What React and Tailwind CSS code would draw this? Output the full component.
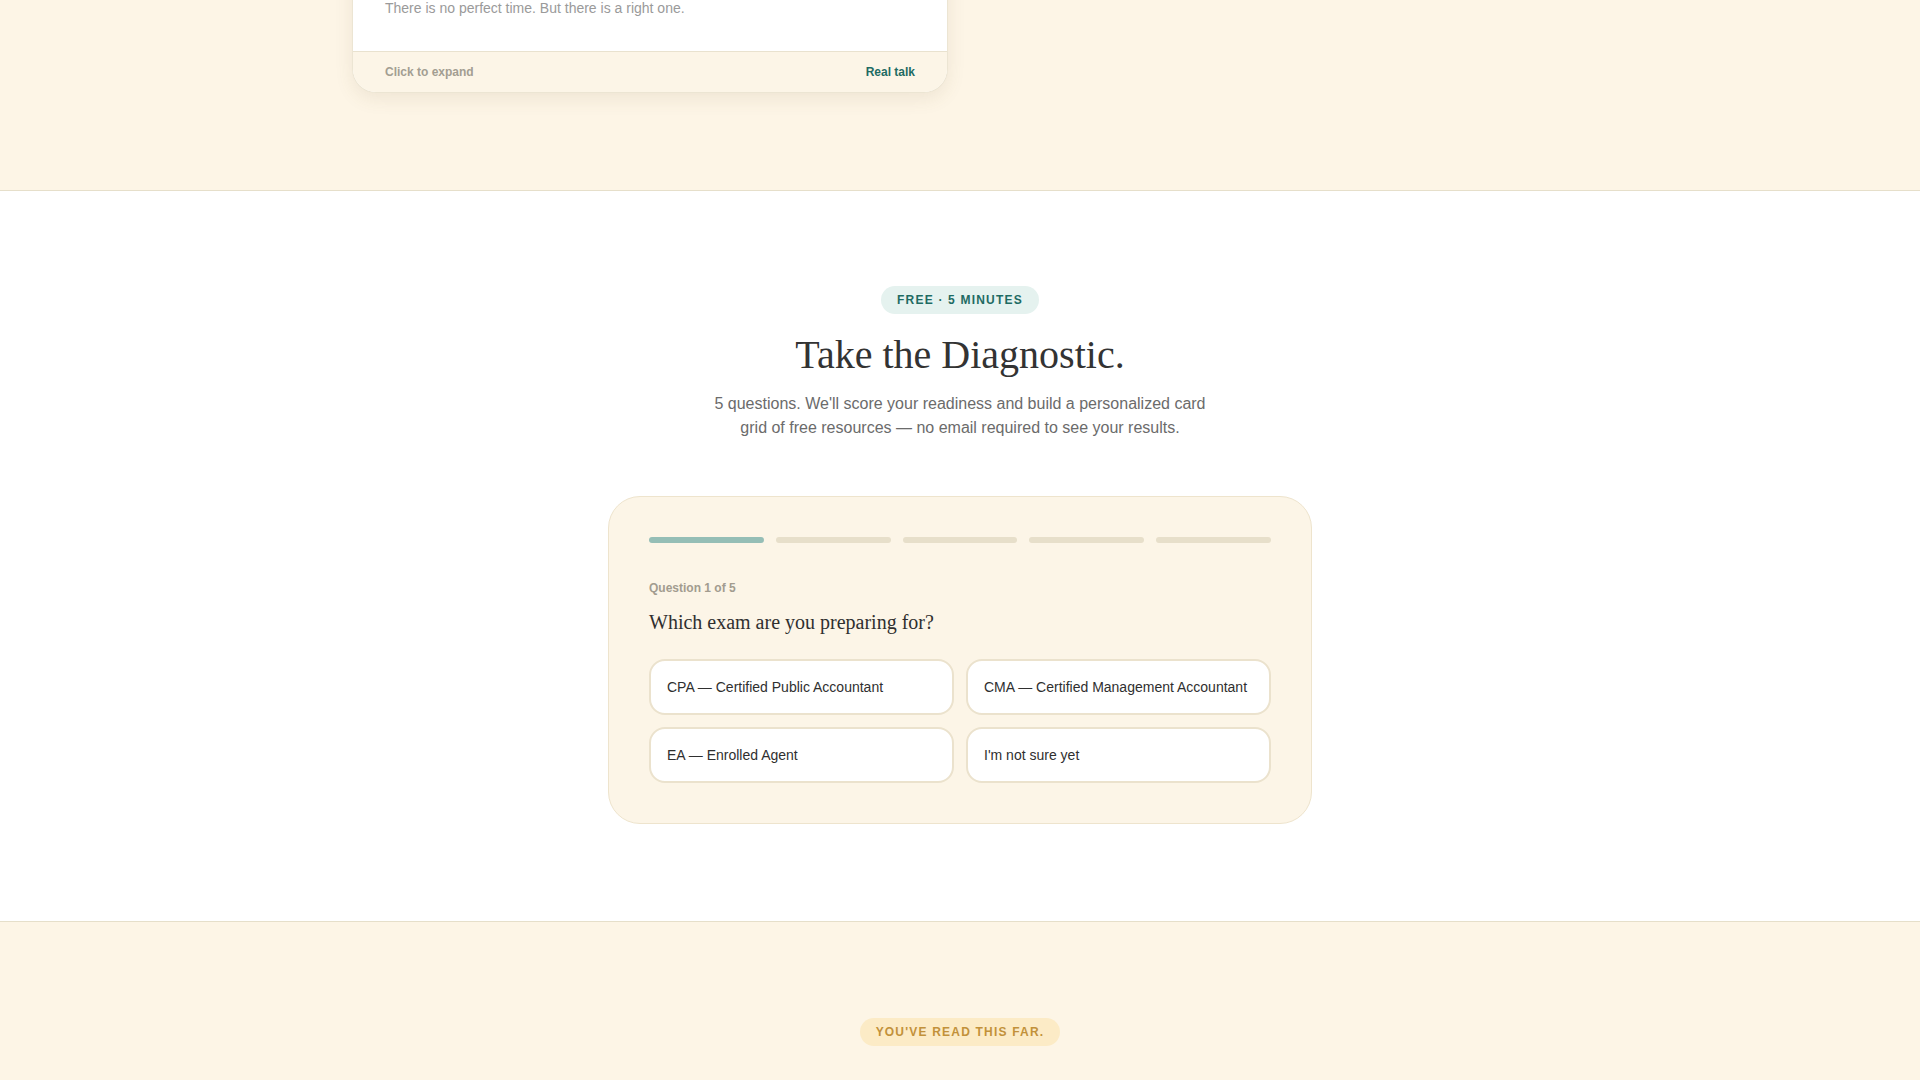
import React from 'react';

const sans = { fontFamily: '"Liberation Sans", Arial, sans-serif' };
const serif = { fontFamily: '"Liberation Serif", "Times New Roman", serif' };

const options = [
    'CPA — Certified Public Accountant',
    'CMA — Certified Management Accountant',
    'EA — Enrolled Agent',
    "I'm not sure yet",
];

function TalkCard() {
    return (
        <div className="-mt-[34px] rounded-b-3xl border border-t-0 border-[#ece5d3] bg-white shadow-[0_6px_18px_rgba(120,100,60,0.10)] overflow-hidden">
            <div className="px-8 pt-8 pb-[33px]">
                <p className="text-sm leading-5 text-[#9a9a9a]">There is no perfect time. But there is a right one.</p>
            </div>
            <div className="flex items-center justify-between border-t border-[#e9e2cf] bg-[#fcf5e7] px-8 h-[41px]">
                <span className="text-xs font-bold text-[#a39e92]">Click to expand</span>
                <span className="text-xs font-bold text-[#1e6b63]">Real talk</span>
            </div>
        </div>
    );
}

function Quiz() {
    const step = 0;
    return (
        <div className="mx-auto w-[704px] rounded-[32px] border border-[#eee4cd] bg-[#fcf5e7] p-10">
            {/* progress */}
            <div className="grid grid-cols-5 gap-3">
                {[0, 1, 2, 3, 4].map(i => (
                    <div key={i} className={i <= step ? 'h-[6px] rounded-full bg-[#95beb6]' : 'h-[6px] rounded-full bg-[#e7dfca]'} />
                ))}
            </div>

            <div className="mt-[37px] text-xs font-bold text-[#a29c8f]">Question 1 of 5</div>
            <h3 className="mt-[12px] text-xl leading-7 text-[#2f2f2f]" style={serif}>Which exam are you preparing for?</h3>

            <div className="mt-[23px] grid grid-cols-2 gap-3">
                {options.map(o => (
                    <button key={o} className="h-[56px] rounded-2xl border-2 border-[#ebe2cd] bg-white px-4 text-left text-sm text-[#2f2f2f]">
                        {o}
                    </button>
                ))}
            </div>
        </div>
    );
}

export default function App() {
    return (
        <div className="min-h-screen bg-white" style={sans}>
            {/* Real talk section (tail) */}
            <section className="bg-[#fdf5e6] pb-[97px] border-b border-[#e6dfca]">
                <div className="mx-auto max-w-7xl px-8">
                    <div className="grid grid-cols-2 gap-6">
                        <TalkCard />
                    </div>
                </div>
            </section>

            {/* Diagnostic */}
            <section className="bg-white pt-[95px] pb-[97px] border-b border-[#e6dfca]">
                <div className="flex flex-col items-center text-center">
                    <span className="rounded-full bg-[#e5f2ef] px-4 py-[6px] text-xs font-bold tracking-[0.1em] text-[#1e6b63]">FREE · 5 MINUTES</span>
                    <h2 className="mt-[17px] text-[40px] leading-[48px] text-[#333333]" style={serif}>Take the Diagnostic.</h2>
                    <p className="mt-[13px] max-w-[512px] text-base leading-6 text-[#6b6b6b]">
                        5 questions. We'll score your readiness and build a personalized card grid of free resources — no email required to see your results.
                    </p>
                </div>
                <div className="mt-[56px]">
                    <Quiz />
                </div>
            </section>

            {/* Closing */}
            <section className="bg-[#fdf5e6] pt-24 pb-24">
                <div className="flex justify-center">
                    <span className="rounded-full bg-[#fcebc6] px-4 py-[6px] text-xs font-bold tracking-[0.1em] text-[#c2913a]">YOU'VE READ THIS FAR.</span>
                </div>
            </section>
        </div>
    );
}
